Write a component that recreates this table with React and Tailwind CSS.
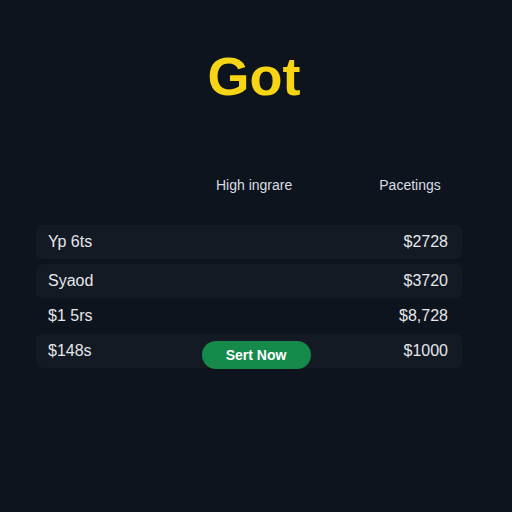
const rows = [
  { label: 'Yp 6ts', amount: '$2728', shaded: true, gap: 'mt-0' },
  { label: 'Syaod', amount: '$3720', shaded: true, gap: 'mt-[5px]' },
  { label: '$1 5rs', amount: '$8,728', shaded: false, gap: 'mt-[1px]' },
  { label: '$148s', amount: '$1000', shaded: true, action: true, gap: 'mt-[1px]' },
];

const App = () => {
  return (
    <div className="w-[512px] h-[512px] bg-[#0e141d] font-['Liberation_Sans',Arial,sans-serif] text-[#e5e7eb] flex flex-col">
      {/* Title */}
      <h1 className="pt-[45px] text-center text-[54px] leading-[62px] font-bold text-[#f7d414] pr-[4px]">Got</h1>

      {/* Column headers */}
      <div className="mt-[70px] flex text-[14px] leading-[16px] text-[#d8dde4]">
        <span className="ml-[216px]">High ingrare</span>
        <span className="ml-[87px]">Pacetings</span>
      </div>

      {/* Rows */}
      <div className="mt-[32px] mx-[36px] w-[426px] flex flex-col">
        {rows.map((row) => (
          <div
            key={row.label}
            className={`${row.gap} h-[34px] pl-[12px] pr-[14px] rounded-[6px] flex items-center text-[16px] ${row.shaded ? 'bg-[#131a24]' : ''}`}
          >
            <span>{row.label}</span>
            {row.action && (
              <button className="ml-[110px] mt-[8px] h-[28px] w-[109px] rounded-full bg-[#158a4a] text-white text-[14px] font-bold">
                Sert Now
              </button>
            )}
            <span className="ml-auto">{row.amount}</span>
          </div>
        ))}
      </div>
    </div>
  );
};

export default App;
